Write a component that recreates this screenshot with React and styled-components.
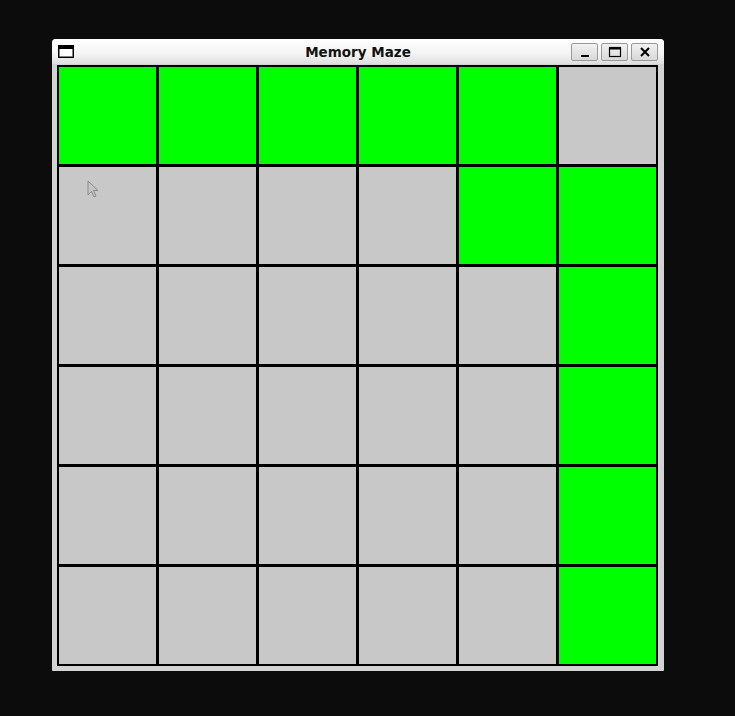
import React from "react";
import styled, { createGlobalStyle } from "styled-components";

const GlobalStyle = createGlobalStyle`
  html, body {
    margin: 0;
    padding: 0;
    background: #0c0c0c;
  }
  #root {
    min-height: 716px;
  }
`;

const Desktop = styled.div`
  min-height: 716px;
  padding: 39px 0 0 52px;
  box-sizing: border-box;
  background: #0c0c0c;
`;

const Window = styled.div`
  position: relative;
  width: 612px;
  background: #d3d3d3;
  border-radius: 4px 4px 1px 1px;
  padding: 0 5px 5px 5px;
  box-sizing: border-box;
  font-family: "DejaVu Sans", "Liberation Sans", sans-serif;
`;

const TitleBar = styled.div`
  display: grid;
  grid-template-columns: 1fr auto 1fr;
  align-items: center;
  height: 25px;
  margin: 0 -5px;
  padding: 0 6px;
  background: linear-gradient(#ffffff, #f4f4f4 60%, #dedede);
  border-radius: 4px 4px 0 0;
`;

const Title = styled.div`
  text-align: center;
  font-weight: bold;
  font-size: 13.5px;
  color: #111;
`;

const Buttons = styled.div`
  display: flex;
  justify-content: flex-end;
  gap: 3px;
  padding-top: 1px;
`;

const WinButton = styled.div`
  width: 25px;
  height: 16px;
  border: 1px solid #9a9a9a;
  border-radius: 2px;
  background: linear-gradient(#f2f2f2, #d8d8d8);
  display: flex;
  align-items: center;
  justify-content: center;
`;

const Board = styled.div`
  display: grid;
  grid-template-columns: repeat(6, 97px);
  grid-auto-rows: 97px;
  gap: 3px;
  padding: 2px;
  margin-top: 1px;
  background: #000;
  width: fit-content;
`;

const Cell = styled.div`
  background: ${(p) => (p.$lit ? "#00ff00" : "#c8c8c8")};
`;

const Pointer = styled.svg`
  position: absolute;
  left: 35px;
  top: 141px;
`;

const path = [
  [0, 0], [0, 1], [0, 2], [0, 3], [0, 4],
  [1, 4], [1, 5], [2, 5], [3, 5], [4, 5], [5, 5],
];

function WindowIcon() {
  return (
    <svg width="16" height="13" viewBox="0 0 16 13">
      <rect x="0.75" y="0.75" width="14.5" height="11.5" fill="#fff" stroke="#000" strokeWidth="1.5" />
      <rect x="0" y="0" width="16" height="4" fill="#000" />
    </svg>
  );
}

function App() {
  const lit = new Set(path.map(([r, c]) => r * 6 + c));
  const cells = Array.from({ length: 36 }, (_, i) => i);

  return (
    <>
      <GlobalStyle />
      <Desktop>
        <Window>
          <TitleBar>
            <WindowIcon />
            <Title>Memory Maze</Title>
            <Buttons>
              <WinButton>
                <svg width="12" height="12" viewBox="0 0 12 12">
                  <rect x="2" y="9" width="8" height="2" fill="#000" />
                </svg>
              </WinButton>
              <WinButton>
                <svg width="14" height="12" viewBox="0 0 14 12">
                  <rect x="1.5" y="1.5" width="11" height="9" fill="none" stroke="#000" strokeWidth="1.2" />
                  <rect x="1" y="1" width="12" height="2.5" fill="#000" />
                </svg>
              </WinButton>
              <WinButton>
                <svg width="12" height="12" viewBox="0 0 12 12">
                  <path d="M2 2 L10 10 M10 2 L2 10" stroke="#000" strokeWidth="2" />
                </svg>
              </WinButton>
            </Buttons>
          </TitleBar>
          <Board>
            {cells.map((i) => (
              <Cell key={i} $lit={lit.has(i)} />
            ))}
          </Board>
          <Pointer width="14" height="20" viewBox="0 0 14 20">
            <path d="M1 1 L1 15 L4.5 11.5 L7 17 L9 16 L6.5 10.5 L11 10.5 Z" fill="#c4c4c4" stroke="#8a8a8a" strokeWidth="1" />
          </Pointer>
        </Window>
      </Desktop>
    </>
  );
}

export default App;
